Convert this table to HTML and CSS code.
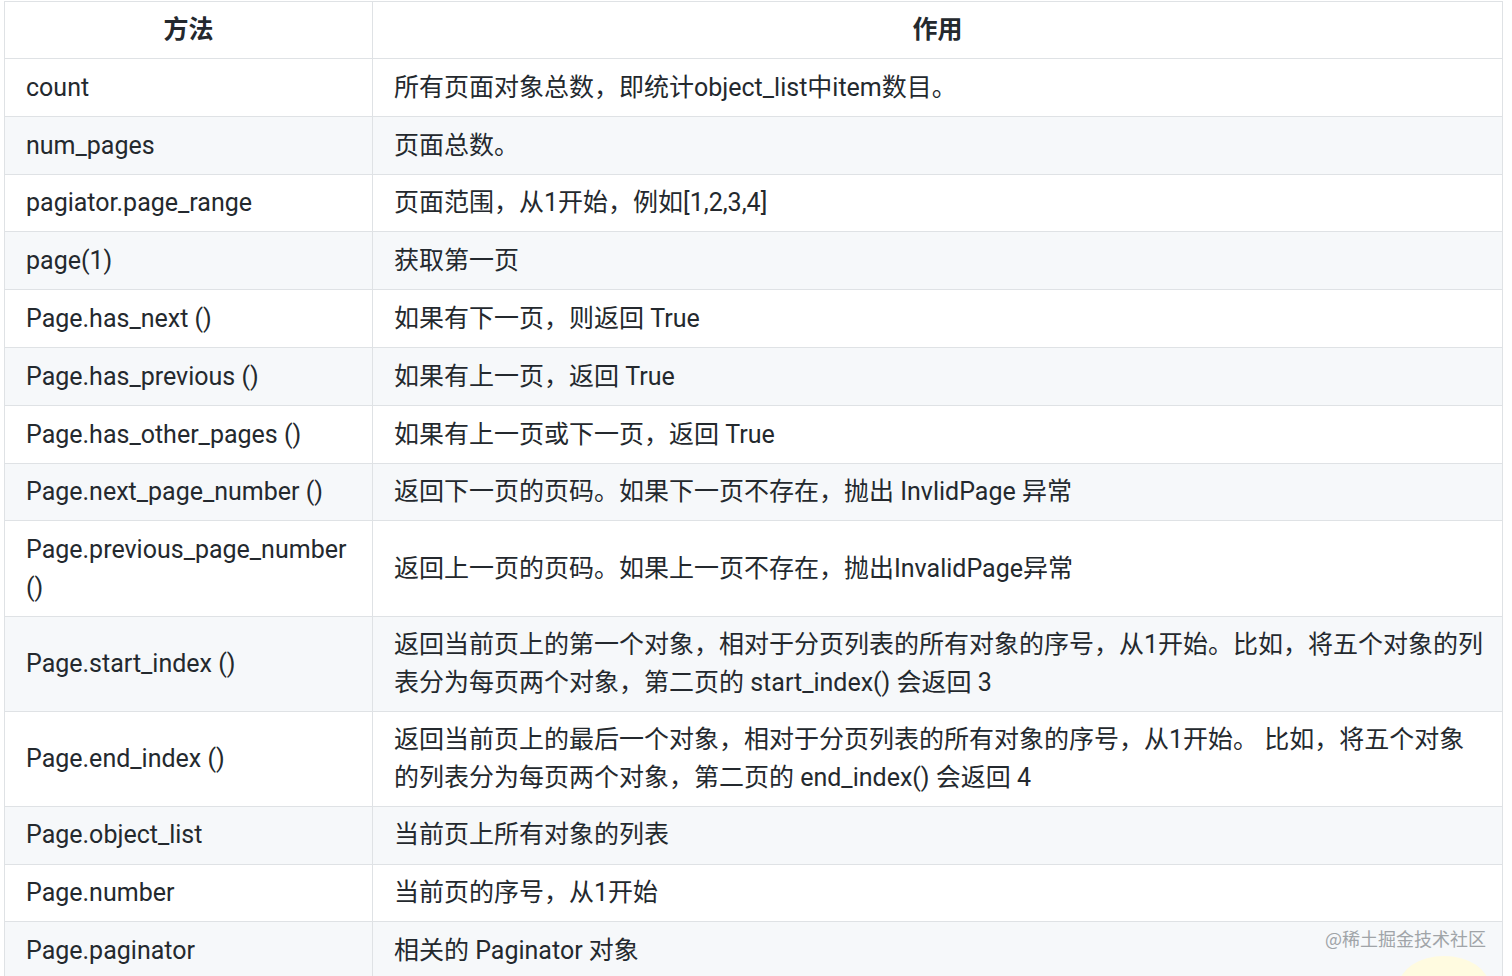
FILE: index.html
```html
<!DOCTYPE html>
<html lang="zh-CN">
<head>
<meta charset="utf-8">
<title>Paginator</title>
<link rel="stylesheet" href="styles.css">
</head>
<body>
<table class="api">
  <colgroup><col class="c1"><col class="c2"></colgroup>
  <thead>
    <tr><th>方法</th><th>作用</th></tr>
  </thead>
  <tbody>
    <tr><td>count</td><td>所有页面对象总数，即统计object_list中item数目。</td></tr>
    <tr><td>num_pages</td><td>页面总数。</td></tr>
    <tr><td>pagiator.page_range</td><td>页面范围，从1开始，例如[1,2,3,4]</td></tr>
    <tr><td>page(1)</td><td>获取第一页</td></tr>
    <tr><td>Page.has_next ()</td><td>如果有下一页，则返回 True</td></tr>
    <tr><td>Page.has_previous ()</td><td>如果有上一页，返回 True</td></tr>
    <tr><td>Page.has_other_pages ()</td><td>如果有上一页或下一页，返回 True</td></tr>
    <tr><td>Page.next_page_number ()</td><td>返回下一页的页码。如果下一页不存在，抛出 InvlidPage 异常</td></tr>
    <tr><td>Page.previous_page_number ()</td><td>返回上一页的页码。如果上一页不存在，抛出InvalidPage异常</td></tr>
    <tr><td>Page.start_index ()</td><td>返回当前页上的第一个对象，相对于分页列表的所有对象的序号，从1开始。比如，将五个对象的列表分为每页两个对象，第二页的 start_index() 会返回 3</td></tr>
    <tr><td>Page.end_index ()</td><td>返回当前页上的最后一个对象，相对于分页列表的所有对象的序号，从1开始。 比如，将五个对象的列表分为每页两个对象，第二页的 end_index() 会返回 4</td></tr>
    <tr><td>Page.object_list</td><td>当前页上所有对象的列表</td></tr>
    <tr><td>Page.number</td><td>当前页的序号，从1开始</td></tr>
    <tr><td>Page.paginator</td><td>相关的 Paginator 对象</td></tr>
  </tbody>
</table>
<div class="glow"></div>
<div class="watermark">@稀土掘金技术社区</div>
</body>
</html>
```
FILE: styles.css
```css
html, body {
  background: #fff;
}
body {
  margin: 1px 0 0 4px;
  font-family: Roboto, "Noto Sans CJK SC", sans-serif;
  color: #24292e;
  overflow: hidden;
  height: 975px;
  position: relative;
}
.api {
  border-collapse: collapse;
  width: 1499px;
  table-layout: fixed;
  font-size: 25px;
  line-height: 37.3px;
}
.c1 { width: 368px; }
.api th, .api td {
  border: 1px solid #dfe2e5;
  padding: 9.75px 18px 9.75px 21px;
  text-align: left;
  vertical-align: middle;
}
.api th {
  font-weight: 700;
  text-align: center;
  padding: 9.4px 21px;
}
.api tbody tr:nth-child(even) {
  background: #f6f8fa;
}
.glow {
  position: absolute;
  left: 1395px;
  top: 955px;
  width: 90px;
  height: 60px;
  border-radius: 50%;
  background: #fffbe0;
}
.watermark {
  position: absolute;
  left: 1321px;
  top: 924px;
  font-size: 18px;
  color: #a0a4a8;
  font-family: "Noto Sans CJK SC", sans-serif;
}
```
